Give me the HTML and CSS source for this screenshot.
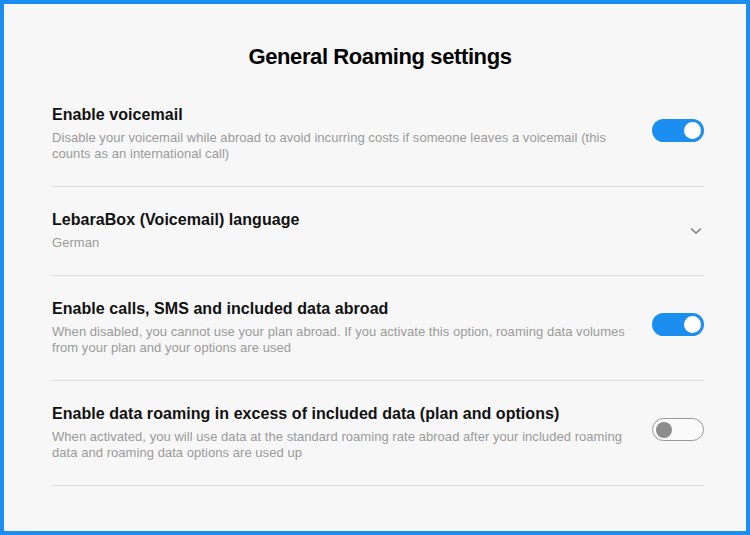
FILE: index.html
```html
<!DOCTYPE html>
<html lang="en">
<head>
<meta charset="utf-8">
<title>General Roaming settings</title>
<link rel="stylesheet" href="styles.css">
</head>
<body>
<main class="frame">
  <h1 class="heading">General Roaming settings</h1>
  <section class="list">
    <div class="row">
      <div class="text">
        <div class="title">Enable voicemail</div>
        <div class="desc">Disable your voicemail while abroad to avoid incurring costs if someone leaves a voicemail (this counts as an international call)</div>
      </div>
      <span class="toggle on"><span class="knob"></span></span>
    </div>
    <div class="row">
      <div class="text">
        <div class="title">LebaraBox (Voicemail) language</div>
        <div class="desc">German</div>
      </div>
      <svg class="chevron" width="12" height="8" viewBox="0 0 12 8"><path d="M1 1.5 L6 6 L11 1.5" fill="none" stroke="#7a7a7a" stroke-width="1.4"/></svg>
    </div>
    <div class="row">
      <div class="text">
        <div class="title">Enable calls, SMS and included data abroad</div>
        <div class="desc">When disabled, you cannot use your plan abroad. If you activate this option, roaming data volumes from your plan and your options are used</div>
      </div>
      <span class="toggle on"><span class="knob"></span></span>
    </div>
    <div class="row">
      <div class="text">
        <div class="title">Enable data roaming in excess of included data (plan and options)</div>
        <div class="desc">When activated, you will use data at the standard roaming rate abroad after your included roaming data and roaming data options are used up</div>
      </div>
      <span class="toggle off"><span class="knob"></span></span>
    </div>
  </section>
</main>
</body>
</html>
```
FILE: styles.css
```css
* { box-sizing: border-box; }
html, body { margin: 0; padding: 0; }
body {
  background: #f7f7f7;
  font-family: "Liberation Sans", Arial, sans-serif;
  color: #111;
}
.frame {
  height: 535px;
  border: 4px solid #1b8ef0;
  padding: 39px 42px 0 48px;
  background: #f7f7f7;
}
.heading {
  margin: 0 0 11px;
  text-align: center;
  font-size: 22px;
  line-height: 28px;
  font-weight: 700;
  letter-spacing: -0.4px;
  color: #000;
  padding-left: 4px;
}
.list {
  display: flex;
  flex-direction: column;
}
.row {
  display: flex;
  align-items: flex-start;
  justify-content: space-between;
  padding: 23px 0 24px;
  border-bottom: 1px solid #dcdcdc;
}
.text {
  flex: 1;
  min-width: 0;
}
.title {
  font-size: 16px;
  line-height: 20px;
  font-weight: 700;
  letter-spacing: 0.05px;
  color: #111;
}
.desc {
  margin-top: 5px;
  max-width: 582px;
  font-size: 13px;
  line-height: 16px;
  color: #9a9a9a;
  letter-spacing: 0.05px;
}
.toggle {
  flex: none;
  width: 52px;
  height: 23px;
  margin-top: 14px;
  border-radius: 12px;
  display: flex;
  align-items: center;
  padding: 0 3px;
}
.toggle.on {
  background: #1b8ef0;
  justify-content: flex-end;
}
.toggle.on .knob {
  width: 17px;
  height: 17px;
  border-radius: 50%;
  background: #fff;
}
.toggle.off {
  background: #fafafa;
  border: 1px solid #9a9a9a;
  justify-content: flex-start;
}
.toggle.off .knob {
  width: 16px;
  height: 16px;
  border-radius: 50%;
  background: #8d8d8d;
}
.chevron {
  flex: none;
  margin-top: 17px;
  margin-right: 2px;
}
```
